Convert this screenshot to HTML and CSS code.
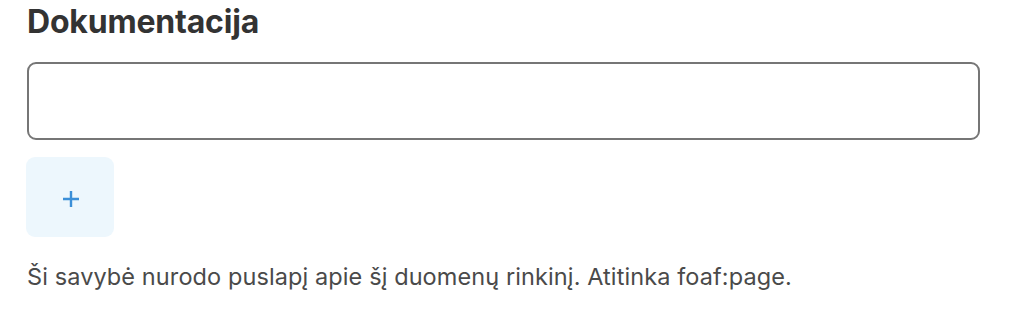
FILE: index.html
```html
<!DOCTYPE html>
<html lang="lt">
<head>
<meta charset="utf-8">
<link rel="stylesheet" href="styles.css">
</head>
<body>
<div class="field">
  <h2 class="field-title">Dokumentacija</h2>
  <div class="input-box"></div>
  <button class="add-btn" type="button" aria-label="Pridėti">
    <svg class="plus" width="18" height="18" viewBox="0 0 18 18"><path d="M9 1v16M1 9h16" stroke="#3b8fd8" stroke-width="2.4" fill="none"/></svg>
  </button>
  <p class="help">Ši savybė nurodo puslapį apie šį duomenų rinkinį. Atitinka foaf:page.</p>
</div>
</body>
</html>
```
FILE: styles.css
```css
html, body { margin: 0; padding: 0; background: #fff; }
body { font-family: Inter, "Noto Sans", sans-serif; color: #333; }
.field { padding: 0 48px 0 27px; display: flex; flex-direction: column; align-items: flex-start; }
.field-title { margin: 0; font-size: 32px; font-weight: 700; line-height: 44px; color: #333; letter-spacing: -0.2px; }
.input-box { margin-top: 18px; box-sizing: border-box; width: 953px; height: 78px; border: 2px solid #767676; border-radius: 9px; background: #fff; }
.add-btn { margin-top: 17px; width: 88px; height: 80px; border: 0; border-radius: 9px; background: #edf7fd; display: flex; align-items: center; justify-content: center; padding: 0 0 0 1px; margin-left: -1px; }
.plus { margin-top: 4px; }
.help { margin: 24px 0 0; font-size: 23.5px; line-height: 32px; color: #4a4a4a; letter-spacing: 0.1px; }
```
